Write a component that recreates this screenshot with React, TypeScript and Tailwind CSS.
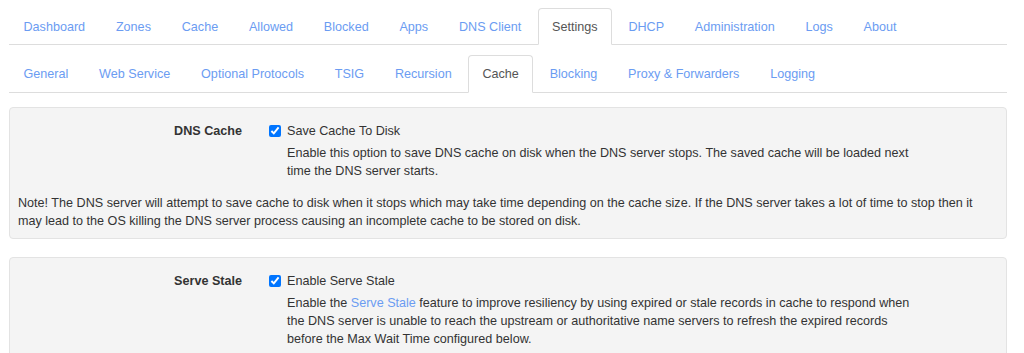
import React from "react";

const mainTabs = [
  "Dashboard",
  "Zones",
  "Cache",
  "Allowed",
  "Blocked",
  "Apps",
  "DNS Client",
  "Settings",
  "DHCP",
  "Administration",
  "Logs",
  "About",
];

const settingsTabs = [
  "General",
  "Web Service",
  "Optional Protocols",
  "TSIG",
  "Recursion",
  "Cache",
  "Blocking",
  "Proxy & Forwarders",
  "Logging",
];

function Tabs({ items, active }: { items: string[]; active: string }) {
  return (
    <ul className="flex border-b border-[#dddddd]">
      {items.map((item) => {
        const isActive = item === active;
        return (
          <li key={item} className="-mb-px mr-[1.8px]">
            <a
              className={`block px-[13.5px] py-[8.7px] leading-[18px] border rounded-t-[4px] ${
                isActive
                  ? "bg-white border-[#dddddd] border-b-white text-[#555555]"
                  : "border-transparent text-[#6b9cf2]"
              }`}
            >
              {item}
            </a>
          </li>
        );
      })}
    </ul>
  );
}

function Option({
  label,
  checkLabel,
  children,
}: {
  label: string;
  checkLabel: string;
  children: React.ReactNode;
}) {
  return (
    <div className="flex">
      <div className="w-[224px] shrink-0 text-right font-bold leading-[18px]">
        {label}
      </div>
      <div className="ml-[27px]">
        <label className="flex items-center leading-[18px]">
          <input
            type="checkbox"
            defaultChecked
            className="w-[12px] h-[12px] m-0 accent-[#0075ff]"
          />
          <span className="ml-[6px]">{checkLabel}</span>
        </label>
        <p className="mt-[4.5px] ml-[18px] w-[624px] leading-[18px]">
          {children}
        </p>
      </div>
    </div>
  );
}

export default function App() {
  return (
    <div
      className="bg-white pl-[9px] pr-[17px] pt-[8px] text-[12.6px] text-[#333333] min-h-[353px]"
      style={{ fontFamily: '"Liberation Sans", Arial, sans-serif' }}
    >
      <Tabs items={mainTabs} active="Settings" />
      <div className="mt-[10px]">
        <Tabs items={settingsTabs} active="Cache" />
      </div>

      {/* DNS Cache */}
      <div className="mt-[14px] border border-[#e3e3e3] rounded-[4px] bg-[#f4f4f4] px-[8px] pt-[14px] pb-[8px]">
        <Option label="DNS Cache" checkLabel="Save Cache To Disk">
          Enable this option to save DNS cache on disk when the DNS server
          stops. The saved cache will be loaded next time the DNS server starts.
        </Option>
        <p className="mt-[13.5px] leading-[18px]">
          Note! The DNS server will attempt to save cache to disk when it stops
          which may take time depending on the cache size. If the DNS server
          takes a lot of time to stop then it may lead to the OS killing the DNS
          server process causing an incomplete cache to be stored on disk.
        </p>
      </div>

      {/* Serve Stale */}
      <div className="mt-[18px] border border-[#e3e3e3] rounded-[4px] bg-[#f4f4f4] px-[8px] pt-[14px] pb-[8px]">
        <Option label="Serve Stale" checkLabel="Enable Serve Stale">
          Enable the <a className="text-[#6b9cf2]">Serve Stale</a> feature to
          improve resiliency by using expired or stale records in cache to
          respond when the DNS server is unable to reach the upstream or
          authoritative name servers to refresh the expired records before the
          Max Wait Time configured below.
        </Option>
      </div>
    </div>
  );
}
